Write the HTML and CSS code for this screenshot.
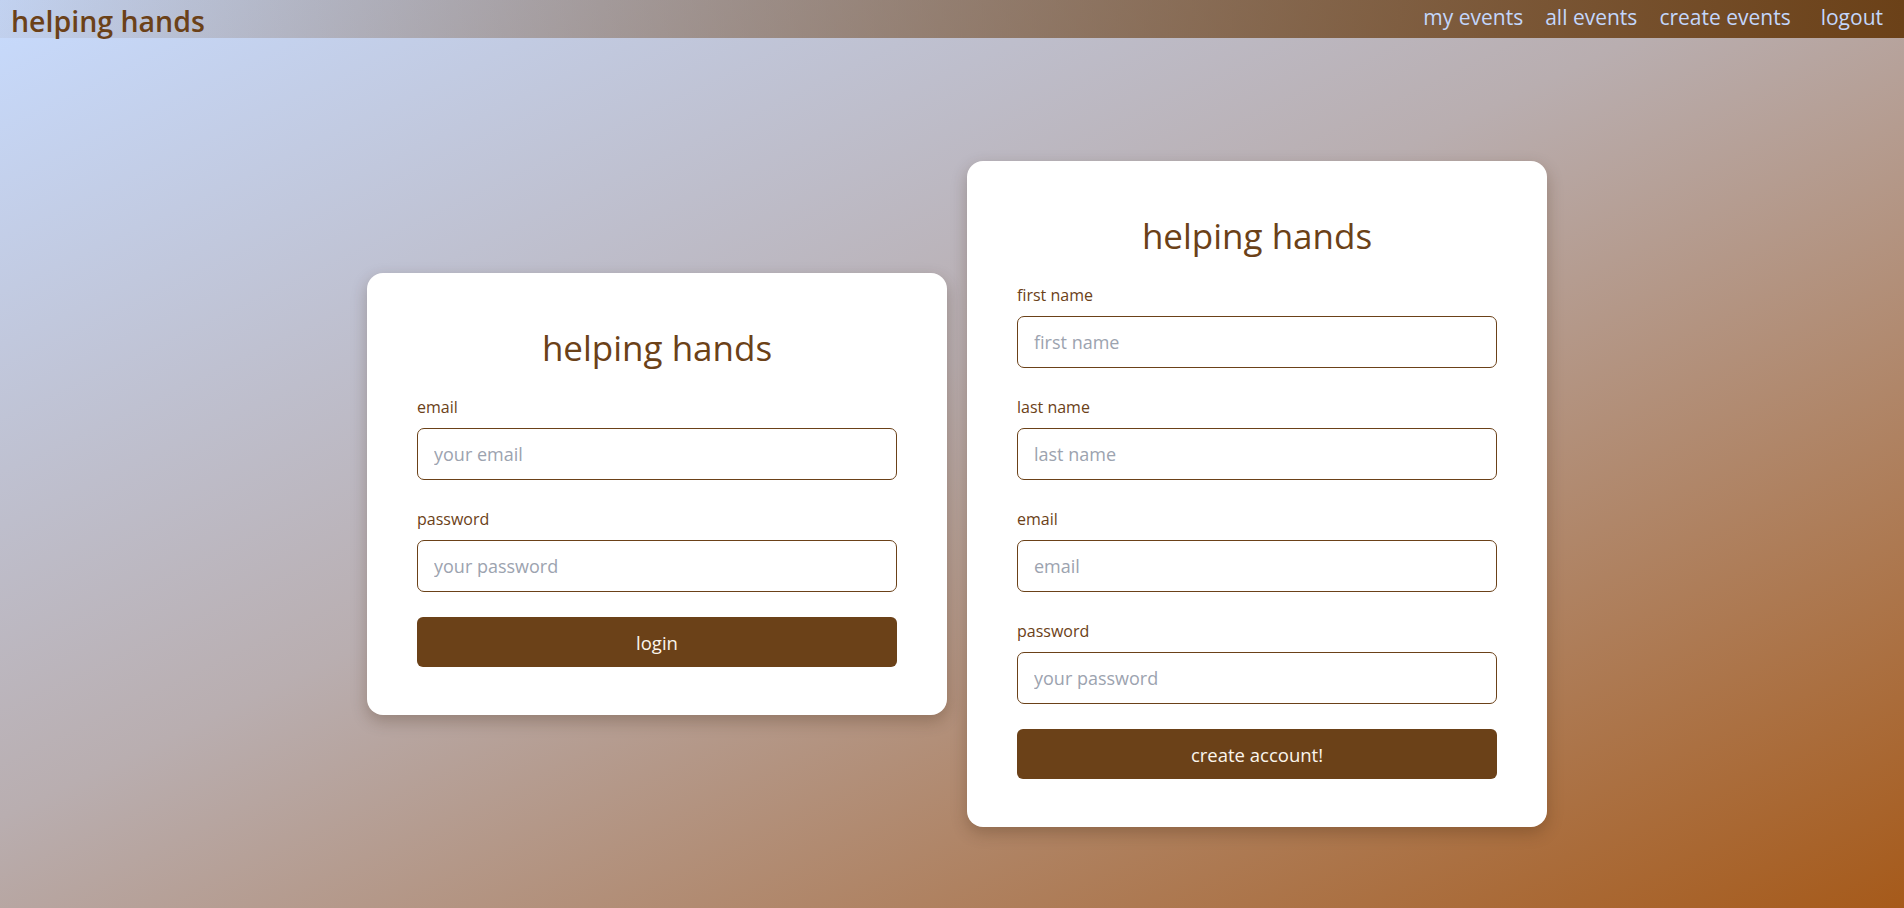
FILE: index.html
```html
<!DOCTYPE html>
<html lang="en">
<head>
<meta charset="utf-8">
<title>helping hands</title>
<link rel="stylesheet" href="styles.css">
</head>
<body>
<div class="page">
  <nav class="topbar">
    <a class="brand" href="#">helping hands</a>
    <div class="links">
      <a href="#">my events</a>
      <a href="#">all events</a>
      <a href="#">create events</a>
      <a class="logout" href="#">logout</a>
    </div>
  </nav>
  <main class="main">
    <section class="card">
      <h2 class="card-title">helping hands</h2>
      <form class="form">
        <div class="field">
          <label class="label" for="l-email">email</label>
          <input class="input" id="l-email" type="email" placeholder="your email">
        </div>
        <div class="field">
          <label class="label" for="l-pass">password</label>
          <input class="input" id="l-pass" type="password" placeholder="your password">
        </div>
        <button class="btn" type="button">login</button>
      </form>
    </section>
    <section class="card">
      <h2 class="card-title">helping hands</h2>
      <form class="form">
        <div class="field">
          <label class="label" for="r-first">first name</label>
          <input class="input" id="r-first" type="text" placeholder="first name">
        </div>
        <div class="field">
          <label class="label" for="r-last">last name</label>
          <input class="input" id="r-last" type="text" placeholder="last name">
        </div>
        <div class="field">
          <label class="label" for="r-email">email</label>
          <input class="input" id="r-email" type="email" placeholder="email">
        </div>
        <div class="field">
          <label class="label" for="r-pass">password</label>
          <input class="input" id="r-pass" type="password" placeholder="your password">
        </div>
        <button class="btn" type="button">create account!</button>
      </form>
    </section>
  </main>
</div>
</body>
</html>
```
FILE: styles.css
```css
* { box-sizing: border-box; }

html, body {
  margin: 0;
  padding: 0;
  height: 100%;
}

body {
  font-family: "Open Sans", "Noto Sans", "Liberation Sans", sans-serif;
  overflow: hidden;
}

.page {
  height: 100vh;
  background: linear-gradient(to bottom right, #c7dbfe 0%, #b9aeb0 45%, #a65a1a 100%);
}

.topbar {
  height: 38px;
  display: flex;
  align-items: center;
  justify-content: space-between;
  padding: 0 21px 0 11px;
  background: linear-gradient(to right, rgba(107, 65, 24, 0.06), rgba(107, 65, 24, 1));
}

.brand {
  color: #6b4118;
  font-size: 28.5px;
  font-weight: 600;
  text-decoration: none;
  line-height: 38px;
  margin-top: 4px;
}

.links {
  display: flex;
  align-items: center;
  gap: 22px;
}

.links a {
  color: #c3d6fb;
  font-size: 21px;
  text-decoration: none;
  line-height: 30px;
  margin-top: -4px;
}

.links .logout {
  margin-left: 8px;
}

.main {
  height: calc(100vh - 38px);
  padding: 42px 0 0 10px;
  display: flex;
  align-items: center;
  justify-content: center;
  gap: 20px;
}

.card {
  width: 580px;
  padding: 48px 50px;
  background: #ffffff;
  border-radius: 16px;
  box-shadow: 0 6px 16px rgba(60, 35, 15, 0.28);
}

.card-title {
  margin: 0 0 20px;
  text-align: center;
  font-size: 35px;
  font-weight: 400;
  line-height: 54px;
  color: #6b4118;
}

.form {
  display: flex;
  flex-direction: column;
}

.field + .field {
  margin-top: 27px;
}

.label {
  display: block;
  font-size: 16px;
  line-height: 24px;
  color: #6b4118;
  margin-bottom: 9px;
}

.input {
  display: block;
  width: 100%;
  height: 52px;
  border: 1px solid #6b4118;
  border-radius: 7px;
  padding: 0 16px;
  font-family: inherit;
  font-size: 18px;
  color: #333;
  background: #fff;
  outline: none;
}

.input::placeholder {
  color: #9ca3af;
}

.btn {
  margin-top: 25px;
  width: 100%;
  height: 50px;
  border: none;
  border-radius: 6px;
  background: #6b4118;
  color: #fbf5ec;
  font-family: inherit;
  font-size: 18.5px;
  font-weight: 500;
  cursor: pointer;
}
```
